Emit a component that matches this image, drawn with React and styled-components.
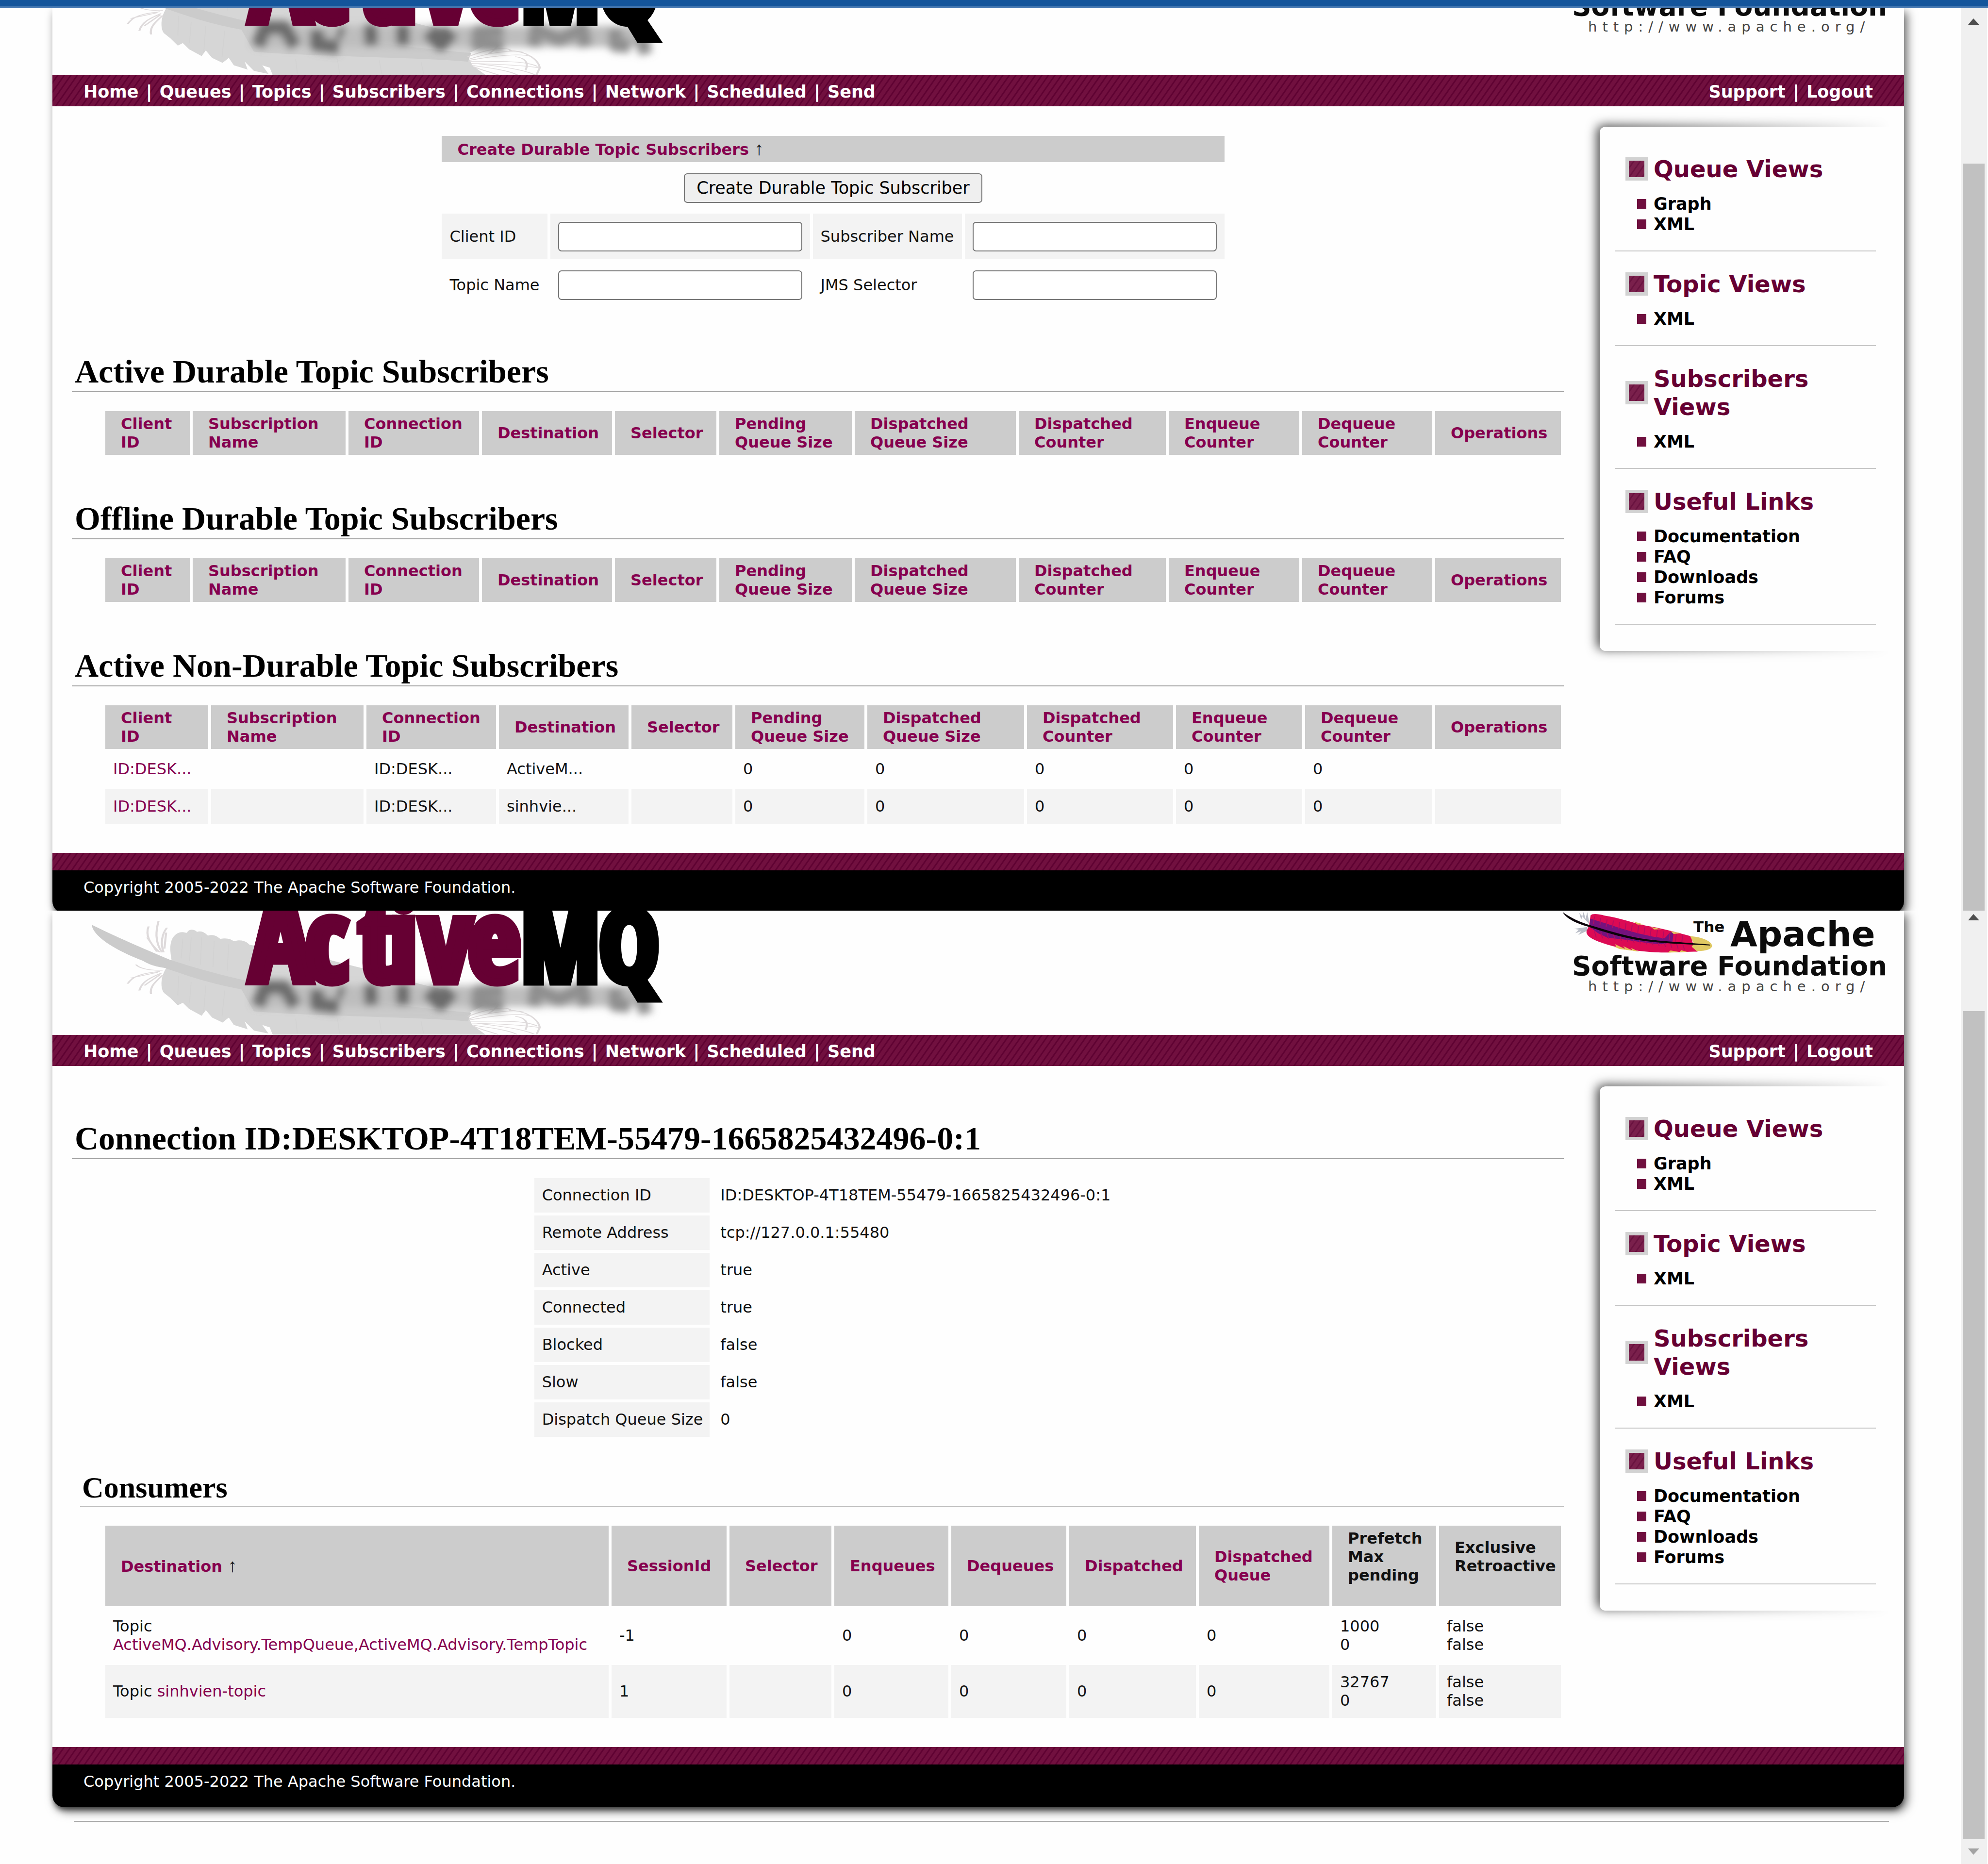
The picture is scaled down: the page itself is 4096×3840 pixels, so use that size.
import React from "react";
import styled, { createGlobalStyle, css } from "styled-components";

const sans = `"DejaVu Sans", "Liberation Sans", sans-serif`;
const serif = `"Liberation Serif", serif`;
const stripes = css`
  background: repeating-linear-gradient(125deg, #71103f 0 7px, #5f0232 8px 10px, #71103f 11px);
`;

const GlobalStyle = createGlobalStyle`
  *, *::before, *::after { box-sizing: border-box; }
  body { margin: 0; background: #fefefe; color: #111; font: 32px/38px ${sans}; }
  a { color: #86004f; text-decoration: none; }
  h1, h2, h3, ul { margin: 0; padding: 0; }
`;

const Desktop = styled.div`
  display: grid;
  grid-template-rows: 17px minmax(0, 1859fr) minmax(0, 1964fr);
  height: 100vh;
  overflow: hidden;
`;
const TitleStrip = styled.div`
  background: #14559b;
  border-bottom: 4px solid #4477b1;
`;
const Window = styled.section`
  display: grid;
  grid-template-columns: minmax(0, 1fr) 56px;
  min-height: 0;
  overflow: hidden;
`;
const Scroller = styled.div`
  min-height: 0;
  overflow: hidden;
  padding: 0 117px 0 108px;
`;
const Sheet = styled.div`
  background: #fefefe;
  border-radius: 0 0 24px 24px;
  box-shadow: 6px 8px 20px rgba(0, 0, 0, 0.6);
`;
const Header = styled.header`
  display: flex;
  align-items: flex-end;
  justify-content: space-between;
  height: ${(p) => p.$height}px;
  padding-right: 23px;
  overflow: hidden;
`;
const Art = styled.svg`
  display: block;
  flex: none;
`;

const NavBar = styled.nav`
  ${stripes}
  display: flex;
  justify-content: space-between;
  padding: 4px 64px 0;
  color: #fff;
  font-size: 35px;
  font-weight: bold;
  line-height: 60px;
`;
const NavGroup = styled.div`
  display: flex;
  white-space: pre;
`;
const NavLink = styled.a`
  color: #fff;
`;
const Divider = styled.span`
  padding: 0 3px;
`;

const Body = styled.div`
  display: grid;
  grid-template-columns: minmax(0, 1fr) 627px;
  column-gap: 74px;
  align-items: start;
  padding-left: 40px;
`;
const Main = styled.main`
  padding: 24px 0 54px;
`;
const Title = styled.h1`
  margin-top: 85px;
  padding: 0 6px 1px;
  border-bottom: 2px solid #a3a3a3;
  color: #000;
  font: bold 68px/80px ${serif};
`;
const SubTitle = styled.h2`
  margin: 62px 0 0 17px;
  padding: 0 4px 2px;
  border-bottom: 2px solid #bdbdbd;
  color: #000;
  font: bold 62px/72px ${serif};
`;
const Indent = styled.div`
  padding: ${(p) => p.$top || 33}px 0 0 63px;
`;

const Grid = styled.table`
  width: ${(p) => (p.$fit ? "auto" : "100%")};
  margin: 0 auto;
  border-collapse: separate;
  border-spacing: 6px;
  table-layout: ${(p) => (p.$fit ? "auto" : "fixed")};
`;
const Col = styled.col`
  width: ${(p) => p.$w}px;
`;
const HeadCell = styled.th`
  padding: 7px 12px 7px 32px;
  background: #ccc;
  color: #111;
  font-size: 32px;
  text-align: left;
  vertical-align: middle;
  white-space: pre-line;
`;
const Cell = styled.td`
  padding: 16px 16px 17px;
  background: ${(p) => (p.$shade ? "#f3f3f3" : "transparent")};
  vertical-align: middle;
`;
const RowLabel = styled.th`
  padding: 16px 14px 17px 16px;
  background: #f3f3f3;
  font-weight: normal;
  text-align: left;
  white-space: nowrap;
`;
const Arrow = styled.span`
  font-family: ${serif};
  font-size: 38px;
  font-weight: normal;
`;

const FormCell = styled.td`
  height: 94px;
  padding: 0 16px;
  background: ${(p) => (p.$shade ? "#f3f3f3" : "transparent")};
  text-align: ${(p) => (p.$center ? "center" : "left")};
  white-space: nowrap;
`;
const Field = styled.input`
  display: block;
  width: 100%;
  height: 61px;
  border: 2px solid #767676;
  border-radius: 7px;
  background: #fff;
  font: 32px/38px ${sans};
`;
const Submit = styled.button`
  height: 61px;
  padding: 0 24px;
  border: 2px solid #767676;
  border-radius: 7px;
  background: #efefef;
  color: #000;
  font: 35px/42px ${sans};
`;

const Side = styled.aside`
  position: relative;
  margin-top: 42px;
  padding: 20px 58px 54px 32px;
`;
const Halo = styled.div`
  position: absolute;
  inset: -30px 24px -30px -36px;
  overflow: hidden;
  -webkit-mask-image: linear-gradient(to right, #000 8%, transparent);
  mask-image: linear-gradient(to right, #000 8%, transparent);
  &::before {
    content: "";
    position: absolute;
    inset: 30px 0 30px 36px;
    border-radius: 12px 0 0 12px;
    background: #fefefe;
    box-shadow: -6px -3px 22px rgba(0, 0, 0, 0.7);
  }
`;
const SideGroup = styled.section`
  position: relative;
  padding: 38px 0 33px 21px;
  border-bottom: 2px solid #c6c6c6;
`;
const SideTitle = styled.h3`
  display: grid;
  grid-template-columns: 46px minmax(0, 1fr);
  column-gap: 12px;
  align-items: center;
  margin-bottom: 22px;
  color: #660033;
  font-size: 48px;
  line-height: 58px;
`;
const Badge = styled.span`
  ${stripes}
  width: 46px;
  height: 48px;
  border: 7px solid #cfcfcf;
  opacity: 0.93;
`;
const SideList = styled.ul`
  list-style: none;
`;
const SideItem = styled.li`
  display: flex;
  align-items: center;
  gap: 15px;
  padding-left: 24px;
  font-size: 35px;
  font-weight: bold;
  line-height: 42px;
  &::before {
    content: "";
    width: 19px;
    height: 20px;
    background: #6f0f3e;
  }
`;
const SideLink = styled.a`
  color: #000;
`;

const Footer = styled.footer`
  border-radius: 0 0 24px 24px;
  background: #000;
  box-shadow: 0 8px 12px -4px rgba(0, 0, 0, 0.6);
  color: #fff;
  &::before {
    content: "";
    display: block;
    height: 36px;
    ${stripes}
  }
`;
const Copyright = styled.p`
  margin: 0;
  padding: 16px 64px 34px;
`;
const Rule = styled.hr`
  height: 2px;
  margin: 28px 31px 0 44px;
  border: 0;
  background: #a8a8a8;
`;

const Track = styled.div`
  display: flex;
  flex-direction: column;
  width: 54px;
  padding: 0 5px 0 4px;
  background: #f0f0f0;
`;
const Nudge = styled.svg`
  flex: none;
  display: block;
  width: 45px;
  height: ${(p) => p.$height}px;
`;
const Thumb = styled.div`
  flex: 1;
  margin-top: ${(p) => p.$gap}px;
  background: #c1c1c1;
`;

const logoFace = `"Open Sans Condensed", "DejaVu Sans Condensed", sans-serif`;

function ActiveLogo() {
  return (
    <Art width="1292" height="256" viewBox="0 0 1292 256">
      <defs>
        <filter id="soft" x="-10%" y="-60%" width="120%" height="220%">
          <feGaussianBlur stdDeviation="8" />
        </filter>
      </defs>
      <g transform="scale(.8612 .2538) translate(-18 -252)">
        <path fill="#d6d6d6" d="M303 650C298 560 298 480 315 440C328 415 334 432 340 432C344 400 356 400 364 424C376 410 384 436 390 455C404 440 412 462 420 482C436 470 446 486 452 500C470 484 482 500 490 530L620 600L760 720L900 850L1010 940L1050 1020L1010 1090L1022 1180L1055 1260L545 1260L538 1200L520 1180L535 1250L500 1225L478 1150L485 1215L452 1180L440 1120L425 1160L400 1120L385 1060L375 1105L345 1050L330 1000L318 1020L300 960L285 920C277 890 275 800 290 720Z" />
        <path fill="#cbcbcb" d="M112 366C150 430 220 540 300 652C380 740 450 800 560 880C760 980 880 1040 1020 1080L1012 1150C860 1110 640 1110 500 1070L470 890C400 850 340 780 288 718C262 705 250 690 235 660C180 590 115 470 112 366Z" />
        <g fill="none" stroke="#dedadb" strokeWidth="5">
          <path d="M275 590C250 520 240 450 248 380M280 590C262 500 266 410 272 335M284 590C276 520 280 440 292 390M268 585L245 470M286 560L290 430" />
          <path d="M282 735C250 740 225 720 218 690M275 745C235 760 210 780 198 845M278 760C250 800 232 830 226 900M282 775C264 830 250 870 254 930M270 752L205 800M276 770L238 860" />
          <path d="M1012 1110C1050 1060 1100 1020 1115 1060M1015 1130C1060 1080 1120 1050 1145 1075M1015 1140C1080 1100 1140 1080 1165 1110M1015 1150C1080 1150 1150 1140 1178 1190M1020 1165C1080 1170 1140 1180 1182 1200M1020 1180C1060 1200 1110 1220 1130 1258M1025 1190C1045 1220 1070 1240 1085 1258M1030 1165C1090 1190 1140 1210 1172 1256M1060 1090C1075 1060 1080 1040 1085 1010" />
          <path d="M1110 1060C1150 1060 1180 1130 1184 1200L1176 1258M1125 1110C1150 1120 1158 1160 1150 1220" />
        </g>
        <g fill="none" stroke="#d2d2d2" strokeWidth="2">
          <path d="M330 480L326 640M350 470L346 660M375 470L372 690M405 500L402 710M440 520L436 740M320 780L318 940M350 830L346 1000M385 860L380 1080M430 900L424 1110M700 1130L705 1250M800 1140L806 1250M900 1150L906 1250M600 1130L604 1250" />
        </g>
      </g>
      <g filter="url(#soft)" fill="none" strokeLinejoin="round" strokeWidth="28">
        <path stroke="#bdbdbd" d="M420 176L1225 176" strokeWidth="44" />
        <g stroke="#6c6c6c">
          <path d="M424 196L438 158L478 158L500 196" />
          <path d="M546 162L544 192L590 198M588 166L600 170" />
          <path d="M655 152L657 194M722 152L722 194" />
          <path d="M776 164L800 188L822 164" strokeWidth="36" />
        </g>
        <g stroke="#8f8f8f">
          <path d="M930 164L878 166L876 192L930 196" />
          <path d="M992 198L996 158L1044 184L1092 158L1098 198" />
          <path d="M1160 160L1160 194L1190 196M1214 176L1222 212" />
        </g>
      </g>
      <g fontFamily={logoFace} fontWeight="bold" strokeWidth="17">
        <text x="407 521 631 695 758 856" y="146" fontSize="236" fill="#660033" stroke="#660033">Active</text>
        <text x="966 1127" y="146" fontSize="206" stroke="#000">MQ</text>
      </g>
    </Art>
  );
}

function ApacheLogo() {
  const barbs = Array.from({ length: 15 }, (_, i) => i);
  return (
    <Art width="690" height="256" viewBox="0 0 690 256">
      <g transform="translate(-83 -42.4) scale(.6178 .2538)">
        <path fill="#8c93a4" d="M240 280L205 185L212 240L220 178L226 235L232 180ZM232 300L188 315L204 322L192 350L212 335L202 365L232 330Z" opacity=".6" />
        <path fill="#dc0a54" d="M243 205C250 188 270 195 290 207C340 225 380 265 430 290C480 310 520 335 578 375L585 440L600 500C560 500 500 510 470 506C400 500 330 470 290 435C250 405 225 370 230 330L238 290Z" />
        <path fill="#74127e" d="M242 232L290 268L340 308L400 350L450 378L490 392L508 345L520 340L516 425L480 440L440 432L400 418L350 400L300 388L268 350L240 300Z" />
        <g stroke="#b40a62" strokeWidth="3">
          {barbs.map((i) => (
            <path key={i} d={`M${256 + i * 21} ${215 + i * 11}l-3 60M${256 + i * 21} ${335 + i * 7}l6 50`} />
          ))}
        </g>
        <path fill="#e3c45c" d="M385 255L420 278L400 280ZM445 300L480 318L455 320ZM510 335L545 350L520 356ZM300 440L330 470L325 440L360 480L352 455L384 492L378 470L405 500L340 478ZM500 508L510 490L540 503L545 488L565 502Z" />
        <path fill="#e0c963" d="M575 375C612 378 646 415 648 450C650 482 622 498 597 495L580 460L588 436Z" />
        <path fill="#0a0208" d="M150 178C175 225 212 265 243 286C310 335 380 390 450 405C500 418 580 428 640 442L642 450C580 440 500 436 440 418C360 400 290 340 236 298C195 270 160 230 150 178Z" />
      </g>
      <g fill="#0b0b0b" fontFamily='"DejaVu Sans", sans-serif' fontWeight="bold">
        <text x="279" y="44" fontSize="31">The</text>
        <text x="355" y="73" fontSize="72">Apache</text>
        <text x="29" y="133" fontSize="55">Software Foundation</text>
      </g>
      <text x="62" y="166" fill="#444" fontFamily='"DejaVu Sans", sans-serif' fontSize="29" letterSpacing="11">http://www.apache.org/</text>
    </Art>
  );
}

const navItems = ["Home", "Queues", "Topics", "Subscribers", "Connections", "Network", "Scheduled", "Send"];

function Links({ items }) {
  return (
    <NavGroup>
      {items.map((item, i) => (
        <React.Fragment key={item}>
          {i > 0 && <Divider> | </Divider>}
          <NavLink href="#">{item}</NavLink>
        </React.Fragment>
      ))}
    </NavGroup>
  );
}

const sideGroups = [
  ["Queue Views", ["Graph", "XML"]],
  ["Topic Views", ["XML"]],
  ["Subscribers Views", ["XML"]],
  ["Useful Links", ["Documentation", "FAQ", "Downloads", "Forums"]],
];

function SidePanel() {
  return (
    <Side>
      <Halo />
      {sideGroups.map(([title, items]) => (
        <SideGroup key={title}>
          <SideTitle><Badge />{title}</SideTitle>
          <SideList>
            {items.map((item) => (
              <SideItem key={item}><SideLink href="#">{item}</SideLink></SideItem>
            ))}
          </SideList>
        </SideGroup>
      ))}
    </Side>
  );
}

function Page({ headerHeight, rule, children }) {
  return (
    <Scroller>
      <Sheet>
        <Header $height={headerHeight}>
          <ActiveLogo />
          <ApacheLogo />
        </Header>
        <NavBar>
          <Links items={navItems} />
          <Links items={["Support", "Logout"]} />
        </NavBar>
        <Body>
          <Main>{children}</Main>
          <SidePanel />
        </Body>
        <Footer>
          <Copyright>Copyright 2005-2022 The Apache Software Foundation.</Copyright>
        </Footer>
      </Sheet>
      {rule && <Rule />}
    </Scroller>
  );
}

function ScrollBar({ gap, down }) {
  return (
    <Track>
      <Nudge $height={down ? 27 : 41} viewBox={down ? "0 7 45 27" : "0 0 45 41"}>
        <path d="M11 34L22 21L34 34Z" fill="#4f4f4f" transform={down ? "translate(0 -7)" : undefined} />
      </Nudge>
      <Thumb $gap={gap} />
      {down && (
        <Nudge $height={51} viewBox="0 0 45 51">
          <path d="M11 19L34 19L22 32Z" fill="#a3a3a3" />
        </Nudge>
      )}
    </Track>
  );
}

const subscriberHeads = ["Client\nID", "Subscription\nName", "Connection\nID", "Destination", "Selector", "Pending\nQueue Size", "Dispatched\nQueue Size", "Dispatched\nCounter", "Enqueue\nCounter", "Dequeue\nCounter", "Operations"];
const durableWidths = [174, 315, 269, 268, 209, 273, 332, 303, 269, 268, 259];
const nonDurableWidths = [212, 314, 267, 267, 208, 266, 323, 301, 260, 262, 259];

function SubscriberTable({ widths, rows = [] }) {
  return (
    <Indent>
      <Grid>
        <colgroup>{widths.map((w, i) => <Col key={i} $w={w} />)}</colgroup>
        <thead>
          <tr>{subscriberHeads.map((h) => <HeadCell key={h} scope="col"><a href="#">{h}</a></HeadCell>)}</tr>
        </thead>
        <tbody>
          {rows.map((row, r) => (
            <tr key={r}>
              {row.map((v, i) => <Cell key={i} $shade={r % 2 === 1}>{i === 0 ? <a href="#">{v}</a> : v}</Cell>)}
            </tr>
          ))}
        </tbody>
      </Grid>
    </Indent>
  );
}

function CreateForm() {
  const rows = [
    [["client", "Client ID"], ["subscriber", "Subscriber Name"]],
    [["topic", "Topic Name"], ["selector", "JMS Selector"]],
  ];
  return (
    <Indent $top={31}>
      <Grid $fit>
        <colgroup><Col $w={217} /><Col $w={535} /><Col $w={307} /><Col $w={535} /></colgroup>
        <thead>
          <tr><HeadCell colSpan={4}><a href="#">Create Durable Topic Subscribers</a> <Arrow>↑</Arrow></HeadCell></tr>
        </thead>
        <tbody>
          <tr><FormCell colSpan={4} $center><Submit type="button">Create Durable Topic Subscriber</Submit></FormCell></tr>
          {rows.map((row, r) => (
            <tr key={r}>
              {row.map(([id, label]) => (
                <React.Fragment key={id}>
                  <FormCell $shade={r === 0}><label htmlFor={id}>{label}</label></FormCell>
                  <FormCell $shade={r === 0}><Field id={id} type="text" /></FormCell>
                </React.Fragment>
              ))}
            </tr>
          ))}
        </tbody>
      </Grid>
    </Indent>
  );
}

const details = [
  ["Connection ID", "ID:DESKTOP-4T18TEM-55479-1665825432496-0:1"],
  ["Remote Address", "tcp://127.0.0.1:55480"],
  ["Active", "true"],
  ["Connected", "true"],
  ["Blocked", "false"],
  ["Slow", "false"],
  ["Dispatch Queue Size", "0"],
];
const consumerHeads = ["SessionId", "Selector", "Enqueues", "Dequeues", "Dispatched", "Dispatched\nQueue"];
const consumerWidths = [1037, 237, 210, 235, 237, 261, 269, 214, 251];
const consumers = [
  ["ActiveMQ.Advisory.TempQueue,ActiveMQ.Advisory.TempTopic", ["-1", "", "0", "0", "0", "0"], "1000"],
  ["sinhvien-topic", ["1", "", "0", "0", "0", "0"], "32767"],
];

export default function App() {
  return (
    <Desktop>
      <GlobalStyle />
      <TitleStrip />
      <Window>
        <Page headerHeight={138}>
          <CreateForm />
          <Title>Active Durable Topic Subscribers</Title>
          <SubscriberTable widths={durableWidths} />
          <Title>Offline Durable Topic Subscribers</Title>
          <SubscriberTable widths={durableWidths} />
          <Title>Active Non-Durable Topic Subscribers</Title>
          <SubscriberTable
            widths={nonDurableWidths}
            rows={[
              ["ID:DESK...", "", "ID:DESK...", "ActiveM...", "", "0", "0", "0", "0", "0", ""],
              ["ID:DESK...", "", "ID:DESK...", "sinhvie...", "", "0", "0", "0", "0", "0", ""],
            ]}
          />
        </Page>
        <ScrollBar gap={279} />
      </Window>
      <Window>
        <Page headerHeight={256} rule>
          <Title>Connection ID:DESKTOP-4T18TEM-55479-1665825432496-0:1</Title>
          <Indent>
            <Grid $fit>
              <colgroup><Col $w={361} /><Col $w={864} /></colgroup>
              <tbody>
                {details.map(([k, v]) => (
                  <tr key={k}><RowLabel scope="row">{k}</RowLabel><Cell>{v}</Cell></tr>
                ))}
              </tbody>
            </Grid>
          </Indent>
          <SubTitle>Consumers</SubTitle>
          <Indent>
            <Grid>
              <colgroup>{consumerWidths.map((w, i) => <Col key={i} $w={w} />)}</colgroup>
              <thead>
                <tr>
                  <HeadCell scope="col"><a href="#">Destination</a> <Arrow>↑</Arrow></HeadCell>
                  {consumerHeads.map((h) => <HeadCell key={h} scope="col"><a href="#">{h}</a></HeadCell>)}
                  <HeadCell scope="col">Prefetch<br />Max<br />pending<br /><br /></HeadCell>
                  <HeadCell scope="col">Exclusive<br />Retroactive<br /><br /></HeadCell>
                </tr>
              </thead>
              <tbody>
                {consumers.map(([name, values, prefetch], r) => (
                  <tr key={name}>
                    <Cell $shade={r === 1}>Topic <a href="#">{name}</a></Cell>
                    {values.map((v, i) => <Cell key={i} $shade={r === 1}>{v}</Cell>)}
                    <Cell $shade={r === 1}>{prefetch}<br />0</Cell>
                    <Cell $shade={r === 1}>false<br />false</Cell>
                  </tr>
                ))}
              </tbody>
            </Grid>
          </Indent>
        </Page>
        <ScrollBar gap={180} down />
      </Window>
    </Desktop>
  );
}
